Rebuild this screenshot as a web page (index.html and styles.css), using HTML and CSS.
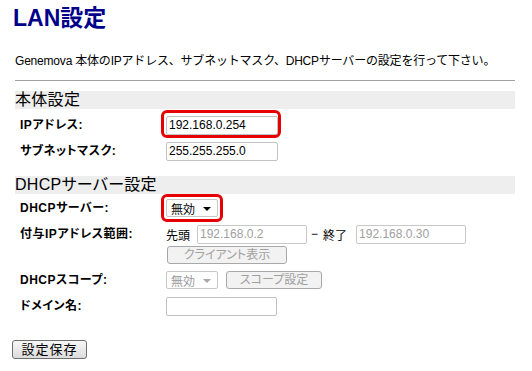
FILE: index.html
```html
<!DOCTYPE html>
<html lang="ja">
<head>
<meta charset="utf-8">
<title>LAN設定</title>
<link rel="stylesheet" href="styles.css">
</head>
<body>
<h1 class="title">LAN設定</h1>
<p class="desc">Genemova 本体のIPアドレス、サブネットマスク、DHCPサーバーの設定を行って下さい。</p>
<div class="rule"></div>

<h2 class="band">本体設定</h2>
<div class="row">
  <div class="label">IPアドレス:</div>
  <div class="val"><span class="hl hl-ip"><input class="field" type="text" value="192.168.0.254"></span></div>
</div>
<div class="row">
  <div class="label">サブネットマスク:</div>
  <div class="val"><input class="field" type="text" value="255.255.255.0"></div>
</div>

<h2 class="band band2">DHCPサーバー設定</h2>
<div class="row">
  <div class="label">DHCPサーバー:</div>
  <div class="val"><span class="hl hl-sel"><span class="select"><span class="sel-text">無効</span><span class="arrow"></span></span></span></div>
</div>
<div class="row row-range">
  <div class="label">付与IPアドレス範囲:</div>
  <div class="val-col">
    <div class="line1">
      <span class="pre">先頭</span><input class="field field-dis" type="text" value="192.168.0.2" disabled>
      <span class="dash">−</span><span class="pre end">終了</span><input class="field field-dis" type="text" value="192.168.0.30" disabled>
    </div>
    <div class="line2"><button class="btn btn-dis btn-client" disabled>クライアント表示</button></div>
  </div>
</div>
<div class="row">
  <div class="label">DHCPスコープ:</div>
  <div class="val"><span class="select select-dis"><span class="sel-text">無効</span><span class="arrow"></span></span><button class="btn btn-dis btn-scope" disabled>スコープ設定</button></div>
</div>
<div class="row">
  <div class="label">ドメイン名:</div>
  <div class="val"><input class="field field-domain" type="text" value=""></div>
</div>

<div class="actions"><button class="btn btn-save">設定保存</button></div>
</body>
</html>
```

FILE: styles.css
```css
html, body {
  margin: 0;
  padding: 0;
  background: #ffffff;
}
body {
  padding: 0 17px 0 15px;
  font-family: "Liberation Sans", "Noto Sans CJK JP", sans-serif;
  font-size: 12px;
  color: #000;
  font-feature-settings: "palt";
}
.title {
  margin: 0 0 0 -2px;
  padding-top: 5px;
  font-size: 23px;
  line-height: 26px;
  font-weight: bold;
  color: #00008b;
}
.desc {
  margin: 22px 0 0 0;
  line-height: 16px;
  font-size: 12px;
  font-feature-settings: normal;
  white-space: nowrap;
  letter-spacing: -0.2px;
}
.rule {
  margin-top: 11px;
  border-top: 1px solid #a0a0a0;
}
.band {
  margin: 10px 0 0 0;
  height: 18px;
  line-height: 18px;
  background: #eeeeee;
  font-size: 16px;
  font-weight: normal;
  letter-spacing: 0.3px;
}
.band2 {
  margin-top: 12px;
}
.row {
  display: flex;
  align-items: center;
  min-height: 26px;
}
.band + .row {
  margin-top: 3px;
}
.band2 + .row {
  margin-top: 1px;
}
.label {
  width: 146px;
  padding-left: 5px;
  flex: none;
  font-weight: bold;
  font-size: 12px;
  line-height: 16px;
  letter-spacing: 0.5px;
}
.val {
  display: flex;
  align-items: center;
}
.row-range {
  align-items: flex-start;
}
.row-range .label {
  margin-top: 5px;
}
.val-col {
  display: flex;
  flex-direction: column;
}
.line1 {
  height: 25px;
  display: flex;
  align-items: center;
  padding-top: 1px;
  box-sizing: border-box;
}
.line2 {
  height: 21px;
}
.pre {
  margin-right: 7px;
  white-space: nowrap;
}
.dash {
  margin: 0 5px 0 4px;
}
.pre.end {
  margin-right: 9px;
}
.field {
  box-sizing: border-box;
  width: 112px;
  height: 19px;
  border: 1px solid #c2c2c2;
  border-radius: 2px;
  padding: 0 2px;
  margin: 0;
  font-family: "Liberation Sans", sans-serif;
  font-size: 12px;
  color: #000;
  background: #fff;
  outline: none;
}
.field-dis {
  width: 110px;
  color: #a0a0a0;
  border-color: #c8c8c8;
}
.field-domain {
  width: 111px;
}
.hl {
  position: relative;
  display: inline-flex;
}
.hl::after {
  content: "";
  position: absolute;
  border: 3px solid #e60000;
  border-radius: 6px;
  pointer-events: none;
}
.hl-ip::after {
  top: -6px;
  left: -5px;
  right: -3px;
  bottom: -3px;
}
.hl-sel::after {
  top: -5px;
  left: -5px;
  right: -5px;
  bottom: -5px;
}
.select {
  box-sizing: border-box;
  width: 52px;
  height: 18px;
  display: inline-flex;
  align-items: center;
  justify-content: space-between;
  border: 1px solid #c8c8c8;
  border-radius: 2px;
  padding: 0 6px 0 4px;
  background: #fff;
  font-size: 12px;
}
.arrow {
  width: 0;
  height: 0;
  border-left: 4px solid transparent;
  border-right: 4px solid transparent;
  border-top: 4px solid #000;
  margin-top: 1px;
}
.select-dis {
  color: #9a9a9a;
}
.select-dis .arrow {
  border-top-color: #a8a8a8;
}
.btn {
  box-sizing: border-box;
  height: 18px;
  margin: 0;
  padding: 0;
  border: 1px solid #a8a8a8;
  border-radius: 3px;
  background: #f2f2f2;
  font-family: "Liberation Sans", "Noto Sans CJK JP", sans-serif;
  font-size: 12px;
  line-height: 16px;
  font-feature-settings: "palt";
}
.btn-dis {
  color: #a0a0a0;
}
.btn-client {
  width: 120px;
  margin-left: 1px;
}
.btn-scope {
  width: 96px;
  margin-left: 8px;
}
.actions {
  margin-top: 21px;
}
.btn-save {
  width: 75px;
  height: 19px;
  margin-left: -3px;
  border: 1px solid #6e6e6e;
  background: linear-gradient(#f7f7f7, #dcdcdc);
  color: #000;
  font-size: 13px;
  line-height: 17px;
  letter-spacing: 1px;
}
```
